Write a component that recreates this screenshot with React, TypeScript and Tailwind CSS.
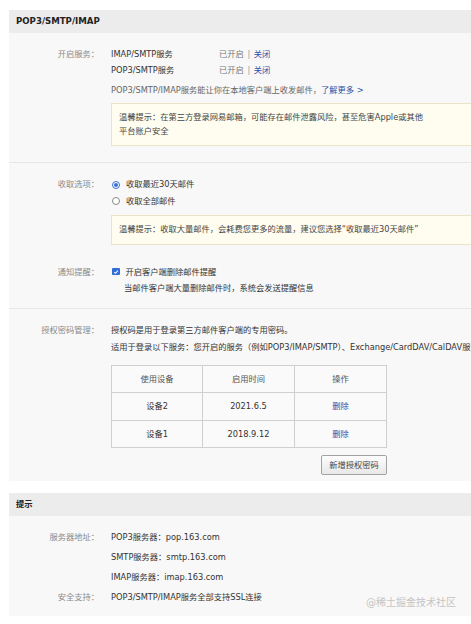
import React from "react";

const font = { fontFamily: '"DejaVu Sans", "Noto Sans CJK SC", sans-serif' };

function Label({ children }: { children: React.ReactNode }) {
  return <div className="w-[90px] shrink-0 text-right text-[#8a8a8a]">{children}</div>;
}

function Warn({ children, cls }: { children: React.ReactNode; cls: string }) {
  return (
    <div className={`border border-[#ebe5c6] bg-[#fefdf0] px-[7px] text-[#444] ${cls}`}>
      {children}
    </div>
  );
}

export default function App() {
  return (
    <div
      style={font}
      className="relative h-[624px] w-[471px] overflow-hidden bg-white pl-[9px] pt-[10px] text-[8.25px] text-[#333] whitespace-nowrap"
    >
      {/* Panel 1 */}
      <div className="w-[560px] bg-[#f8f8f8]">
        <div className="flex h-[23px] items-center bg-[#ececec] px-[7px] text-[8.6px] font-bold text-[#222]">
          POP3/SMTP/IMAP
        </div>

        {/* Section: 开启服务 */}
        <div className="border-b border-[#e6e6e6] pb-[16px] pt-[13px]">
          <div className="flex">
            <div className="w-[90px] shrink-0 text-right leading-[16px] text-[#8a8a8a]">开启服务：</div>
            <div className="ml-[12px] flex flex-col">
              <div className="flex leading-[16px]">
                <div className="w-[108px]">IMAP/SMTP服务</div>
                <div className="text-[#777]">
                  已开启 <span className="mx-[1px] text-[#999]">|</span> <span className="text-[#2f4fa5]">关闭</span>
                </div>
              </div>
              <div className="flex leading-[16px]">
                <div className="w-[108px]">POP3/SMTP服务</div>
                <div className="text-[#777]">
                  已开启 <span className="mx-[1px] text-[#999]">|</span> <span className="text-[#2f4fa5]">关闭</span>
                </div>
              </div>
              <div className="mt-[4px] leading-[16px] text-[#666]">
                POP3/SMTP/IMAP服务能让你在本地客户端上收发邮件，
                <span className="text-[#2f4fa5]">了解更多 &gt;</span>
              </div>
              <Warn cls="mt-[5px] w-[440px] py-[7px] leading-[13.7px]">
                <div>温馨提示：在第三方登录网易邮箱，可能存在邮件泄露风险，甚至危害Apple或其他</div>
                <div>平台账户安全</div>
              </Warn>
            </div>
          </div>
        </div>

        {/* Section: 收取选项 / 通知提醒 */}
        <div className="border-b border-[#e6e6e6] pb-[12px] pt-[13px]">
          <div className="flex">
            <div className="w-[90px] shrink-0 text-right leading-[16.5px] text-[#8a8a8a]">收取选项：</div>
            <div className="ml-[12px] flex flex-col">
              <div className="flex items-center leading-[16.5px]">
                <span className="ml-[1px] flex h-[8px] w-[8px] items-center justify-center rounded-full border border-[#3a6fd8] bg-white">
                  <span className="h-[4px] w-[4px] rounded-full bg-[#3a6fd8]" />
                </span>
                <span className="ml-[6px]">收取最近30天邮件</span>
              </div>
              <div className="flex items-center leading-[16.5px]">
                <span className="ml-[1px] h-[8px] w-[8px] rounded-full border border-[#8a8a8a] bg-white" />
                <span className="ml-[6px]">收取全部邮件</span>
              </div>
              <Warn cls="mt-[6px] w-[440px] py-[7px] leading-[13.3px]">
                温馨提示：收取大量邮件，会耗费您更多的流量，建议您选择“收取最近30天邮件”
              </Warn>
            </div>
          </div>

          <div className="mt-[19px] flex">
            <div className="w-[90px] shrink-0 text-right leading-[16px] text-[#8a8a8a]">通知提醒：</div>
            <div className="ml-[12px] flex flex-col">
              <div className="flex items-center leading-[16px]">
                <span className="ml-[1px] flex h-[7.5px] w-[7.5px] items-center justify-center rounded-[1px] bg-[#2f6fd6]">
                  <svg viewBox="0 0 10 10" className="h-[6px] w-[6px]">
                    <path d="M2 5.2 L4.2 7.3 L8.2 2.6" fill="none" stroke="white" strokeWidth="1.7" />
                  </svg>
                </span>
                <span className="ml-[6px]">开启客户端删除邮件提醒</span>
              </div>
              <div className="ml-[13px] leading-[16px]">当邮件客户端大量删除邮件时，系统会发送提醒信息</div>
            </div>
          </div>
        </div>

        {/* Section: 授权密码管理 */}
        <div className="pb-[6px] pt-[13px]">
          <div className="flex">
            <div className="w-[90px] shrink-0 text-right leading-[16px] text-[#8a8a8a]">授权密码管理：</div>
            <div className="ml-[12px] flex flex-col">
              <div className="leading-[16px]">授权码是用于登录第三方邮件客户端的专用密码。</div>
              <div className="mt-[1px] leading-[16px]">
                适用于登录以下服务：您开启的服务（例如POP3/IMAP/SMTP）、Exchange/CardDAV/CalDAV服务
              </div>
              <div className="mt-[10px] w-[276px]">
                <table className="w-[276px] border-collapse bg-[#fafafa] text-center">
                  <tbody>
                    <tr className="h-[27.5px]">
                      <td className="w-[91px] border border-[#cfcfcf] text-[#555]">使用设备</td>
                      <td className="w-[92px] border border-[#cfcfcf] text-[#555]">启用时间</td>
                      <td className="border border-[#cfcfcf] text-[#555]">操作</td>
                    </tr>
                    <tr className="h-[27.5px]">
                      <td className="border border-[#cfcfcf]">设备2</td>
                      <td className="border border-[#cfcfcf]">2021.6.5</td>
                      <td className="border border-[#cfcfcf] text-[#2f4fa5]">删除</td>
                    </tr>
                    <tr className="h-[27.5px]">
                      <td className="border border-[#cfcfcf]">设备1</td>
                      <td className="border border-[#cfcfcf]">2018.9.12</td>
                      <td className="border border-[#cfcfcf] text-[#2f4fa5]">删除</td>
                    </tr>
                  </tbody>
                </table>
                <div className="mt-[7px] flex justify-end">
                  <button className="flex h-[19.5px] w-[66px] items-center justify-center rounded-[2px] border border-[#a3a3a3] bg-gradient-to-b from-[#fdfdfd] to-[#e8e8e8] text-[8.25px] text-[#444]">
                    新增授权密码
                  </button>
                </div>
              </div>
            </div>
          </div>
        </div>
      </div>

      {/* Panel 2 */}
      <div className="mt-[12px] w-[560px] bg-[#f8f8f8]">
        <div className="flex h-[23px] items-center bg-[#ececec] px-[7px] text-[8.3px] font-bold text-[#222]">
          提示
        </div>
        <div className="pb-[9px] pt-[11px]">
          <div className="flex leading-[20px]">
            <Label>服务器地址：</Label>
            <div className="ml-[12px] flex flex-col">
              <div>POP3服务器：pop.163.com</div>
              <div>SMTP服务器：smtp.163.com</div>
              <div>IMAP服务器：imap.163.com</div>
            </div>
          </div>
          <div className="flex leading-[20px]">
            <Label>安全支持：</Label>
            <div className="ml-[12px]">POP3/SMTP/IMAP服务全部支持SSL连接</div>
          </div>
        </div>
      </div>

      <div className="absolute left-[366px] top-[596px] text-[10px] leading-[14px] text-[#c4c4c4]">
        @稀土掘金技术社区
      </div>
    </div>
  );
}
